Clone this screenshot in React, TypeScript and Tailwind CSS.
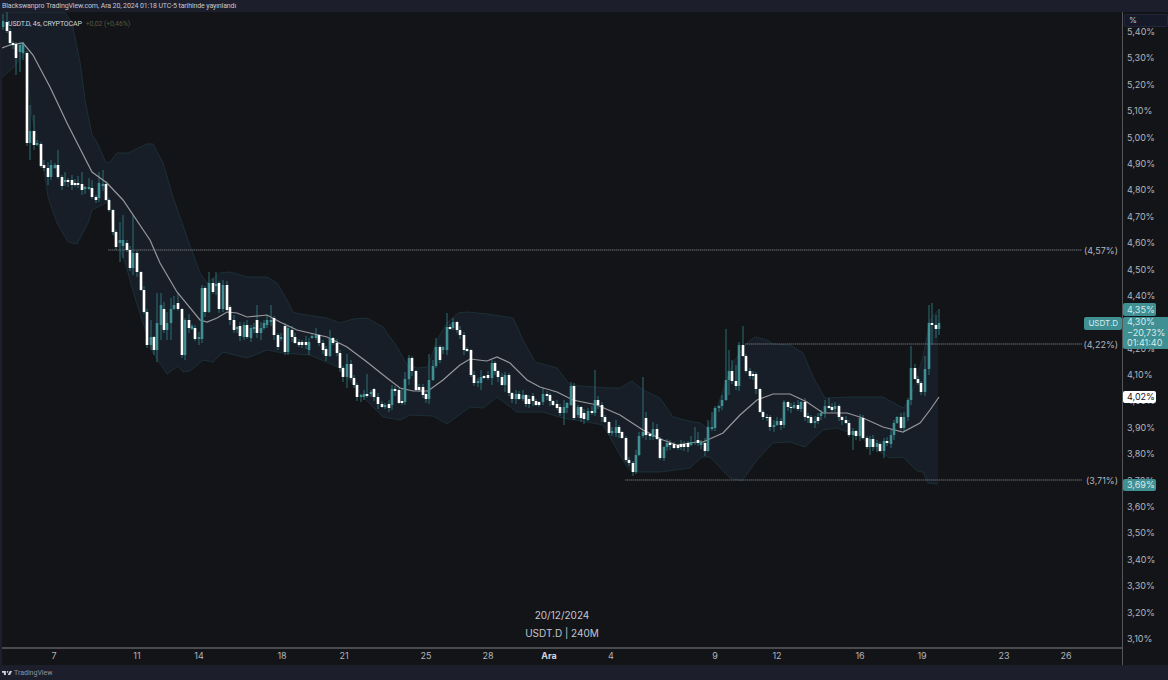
const FONT = { fontFamily: 'Inter, "Liberation Sans", sans-serif' };
const SMALL = { fontFamily: 'Roboto, "Liberation Sans", sans-serif' };

// x, top, bottom, up (1 teal / 0 white), optional wick top, wick bottom
type Candle = [number, number, number, number, number?, number?];

const candles: Candle[] = [
  [3, 21, 27, 1, 14, 30], [7, 22, 31, 0, 12], [10, 31, 43, 0], [13, 43, 45, 0], [16, 44, 58, 0, 42, 75], [20, 45, 52, 1, 42, 72],
  [23, 44, 53, 1, 42, 60], [27, 53, 143, 0], [30, 131, 143, 1, 105, 160], [34, 131, 145, 0, 115, 150], [37, 143, 145, 1],
  [41, 144, 166, 0], [44, 165, 168, 0, 160], [48, 168, 177, 0, 162, 185], [51, 165, 177, 1, 160, 180], [55, 165, 168, 1],
  [58, 165, 177, 0, 150], [62, 177, 186, 0, 175, 190], [65, 180, 182, 1, 172], [68, 180, 182, 0], [72, 180, 185, 0, 175, 190],
  [75, 183, 185, 0], [78, 183, 185, 0, 176], [82, 184, 190, 0, 172, 195], [85, 187, 189, 1], [89, 187, 189, 1, 178],
  [92, 188, 197, 0, 180], [96, 197, 200, 0], [99, 183, 198, 1, 172, 202], [103, 184, 186, 1, 170], [106, 184, 200, 0],
  [109, 200, 210, 0], [113, 210, 232, 0], [116, 232, 247, 0, 230, 250], [120, 240, 243, 1, 222, 262], [123, 240, 246, 1, 215, 258],
  [127, 243, 250, 0, 240], [130, 250, 268, 0], [133, 253, 268, 1, 215, 275], [137, 253, 272, 0], [141, 272, 290, 0],
  [144, 290, 312, 0], [147, 312, 345, 0], [151, 337, 345, 1, 320, 350], [154, 337, 350, 0], [157, 323, 350, 1, 293, 362],
  [161, 305, 325, 1, 293, 340], [164, 309, 330, 0, 302], [167, 323, 330, 1, 312, 340], [171, 309, 323, 1, 298, 340], [174, 305, 309, 1, 296],
  [178, 303, 309, 0, 293], [182, 309, 355, 0], [185, 320, 355, 1, 318, 360], [189, 320, 328, 0, 314], [192, 326, 329, 1],
  [195, 328, 339, 0, 325], [199, 337, 339, 1, 332, 345], [202, 288, 339, 1], [205, 288, 312, 0], [209, 283, 312, 1, 272],
  [213, 283, 292, 0, 278], [216, 284, 286, 1, 272, 295], [219, 283, 309, 0], [223, 285, 309, 1, 280, 312], [227, 285, 310, 0],
  [230, 307, 320, 0, 305, 325], [234, 320, 330, 0, 315], [237, 327, 329, 1], [240, 326, 336, 0, 322], [244, 325, 337, 1, 322, 340],
  [247, 325, 337, 0, 320], [251, 328, 338, 1, 325, 342], [254, 327, 329, 1], [257, 320, 333, 0, 305], [261, 328, 333, 1, 322, 340],
  [264, 323, 328, 1, 320], [267, 320, 325, 1, 315], [271, 320, 322, 1, 305], [274, 318, 335, 0], [278, 335, 347, 0, 333, 350],
  [281, 337, 339, 1], [285, 326, 352, 0], [288, 328, 352, 1, 325, 355], [292, 330, 337, 0, 326], [295, 337, 343, 0],
  [299, 342, 345, 0], [302, 342, 345, 0], [306, 342, 345, 0, 336], [309, 342, 350, 1, 338, 355], [312, 336, 338, 1],
  [316, 335, 338, 1, 328], [319, 335, 343, 0], [323, 343, 350, 0, 340], [326, 349, 356, 0], [330, 338, 356, 1, 330],
  [333, 338, 343, 0], [337, 343, 353, 0], [340, 353, 368, 0], [343, 368, 377, 0], [347, 364, 377, 1, 354, 388],
  [351, 364, 378, 0], [354, 378, 385, 0], [357, 385, 397, 0], [361, 395, 397, 1], [364, 394, 397, 1, 390, 400],
  [367, 394, 396, 0, 374], [371, 392, 394, 1], [374, 389, 397, 0], [378, 397, 404, 0], [382, 404, 407, 0],
  [385, 405, 407, 1], [389, 404, 408, 0, 400, 412], [392, 389, 405, 1, 385, 410], [395, 389, 391, 0], [399, 390, 403, 0],
  [402, 401, 403, 0, 388], [405, 379, 402, 1, 372], [409, 358, 379, 1, 355, 385], [412, 358, 371, 0], [416, 371, 390, 0],
  [419, 387, 390, 0, 384], [423, 387, 395, 0], [426, 394, 399, 0], [429, 380, 399, 1, 354], [433, 366, 380, 1, 360],
  [436, 347, 366, 1, 338], [440, 347, 360, 0], [443, 347, 350, 1], [447, 327, 350, 1, 313], [450, 327, 329, 0],
  [453, 322, 328, 1, 318], [457, 322, 330, 0], [460, 330, 335, 0], [464, 335, 350, 0], [467, 349, 351, 0],
  [471, 350, 375, 0], [474, 375, 383, 0], [478, 381, 383, 1], [481, 377, 383, 1, 370, 390], [484, 376, 378, 0],
  [488, 375, 378, 0], [492, 363, 378, 1, 360, 385], [495, 363, 371, 0], [498, 371, 377, 0], [502, 377, 385, 0],
  [505, 375, 385, 1, 372, 392], [509, 375, 393, 0], [512, 393, 399, 0], [516, 394, 399, 1], [519, 394, 399, 0],
  [523, 395, 399, 1, 390], [526, 395, 404, 0], [529, 399, 404, 0], [533, 396, 401, 0], [536, 401, 405, 0],
  [539, 402, 405, 0], [543, 394, 402, 1, 388], [547, 394, 396, 0], [550, 395, 401, 0], [553, 401, 405, 0],
  [557, 404, 408, 0], [560, 407, 413, 0], [564, 407, 413, 1, 400, 425], [567, 403, 408, 1], [571, 386, 405, 1],
  [574, 386, 418, 0], [578, 407, 415, 1], [581, 407, 418, 0], [584, 413, 419, 0], [588, 411, 420, 1],
  [592, 411, 413, 0, 406], [595, 400, 413, 1, 370], [598, 400, 405, 0], [602, 405, 417, 0], [605, 417, 422, 0],
  [609, 422, 433, 0], [612, 431, 433, 1], [616, 427, 433, 1, 420], [619, 427, 433, 0], [622, 432, 438, 0],
  [626, 438, 460, 0, 436], [629, 460, 463, 0], [633, 463, 472, 0], [636, 455, 472, 1, 450, 474], [639, 436, 455, 1, 432],
  [643, 432, 436, 1, 377], [646, 418, 435, 0, 412, 440], [650, 434, 436, 0], [653, 429, 437, 1, 422, 440], [657, 429, 439, 0, 424],
  [660, 439, 458, 0], [664, 447, 458, 1], [667, 443, 447, 1], [670, 443, 445, 0], [674, 444, 448, 0],
  [678, 445, 448, 0], [681, 444, 447, 0], [684, 444, 447, 0], [688, 443, 447, 0], [691, 442, 445, 1, 436],
  [695, 442, 443, 1, 427], [698, 440, 443, 0, 432], [701, 442, 445, 1], [705, 443, 451, 0, 438], [708, 427, 451, 1, 420],
  [712, 427, 429, 1, 412], [715, 408, 428, 1], [719, 406, 408, 1], [722, 400, 406, 1, 395, 410], [726, 380, 400, 1, 329],
  [729, 371, 380, 1, 350, 395], [732, 371, 381, 0, 360], [736, 381, 386, 0, 365], [739, 345, 386, 1], [743, 345, 356, 0, 326],
  [746, 356, 371, 0, 354], [750, 371, 376, 0, 368], [753, 374, 376, 0], [756, 374, 389, 0], [760, 389, 412, 0],
  [763, 412, 417, 0, 410, 420], [767, 417, 418, 0], [770, 417, 427, 0], [774, 425, 427, 1, 420, 432], [777, 421, 425, 1],
  [781, 421, 425, 0, 418, 430], [784, 402, 425, 1], [788, 402, 407, 0], [791, 407, 408, 0], [794, 405, 408, 1],
  [798, 405, 409, 0, 400], [801, 402, 409, 1], [805, 402, 417, 0], [808, 416, 418, 0], [811, 417, 423, 0],
  [815, 421, 423, 1, 416, 428], [818, 417, 421, 0], [821, 413, 416, 1], [825, 406, 413, 1, 400], [829, 406, 408, 0, 398],
  [832, 407, 410, 0], [835, 406, 409, 1, 402], [839, 406, 417, 0], [842, 417, 420, 0], [846, 420, 423, 0],
  [849, 423, 435, 0], [853, 431, 435, 1, 428, 450], [856, 431, 436, 0], [860, 418, 436, 1], [863, 418, 438, 0],
  [867, 438, 447, 0], [870, 439, 447, 1, 436, 455], [873, 439, 447, 0], [877, 443, 447, 1], [880, 444, 451, 0],
  [884, 441, 451, 1, 438, 458], [887, 441, 443, 0], [891, 435, 444, 1, 430], [894, 423, 435, 1, 420], [897, 417, 423, 1],
  [901, 417, 428, 0], [904, 417, 428, 1, 412], [908, 400, 417, 1], [911, 368, 400, 1, 346], [915, 368, 379, 0],
  [918, 379, 383, 0], [921, 383, 392, 0], [925, 369, 392, 1, 356], [929, 323, 369, 1, 305, 375], [932, 323, 325, 0, 303, 345],
  [936, 325, 329, 0, 315, 338], [939, 323, 329, 1, 309, 335],
];

const upper = "0,12 65,12 72,23 80,62 85,100 92,135 97,142 106,163 110,162 117,153 128,153 147,144 153,144 163,163 173,197 188,240 200,273 207,283 220,273 230,272 247,277 267,277 277,283 287,300 293,312 300,314 327,318 340,323 353,319 367,318 383,327 397,347 407,365 417,368 428,367 437,340 447,323 458,313 467,312 487,314 513,318 523,340 535,362 557,368 570,385 607,388 620,388 632,381 643,390 660,398 673,417 693,422 700,423 707,428 715,413 733,363 747,343 755,337 767,340 773,344 790,345 803,353 813,377 825,398 850,397 883,397 903,408 910,400 923,357 930,320 938,310";
const lower = "938,484 928,483 923,472 917,471 903,457 890,458 877,450 857,435 837,428 823,430 805,447 790,442 773,443 757,460 742,481 730,478 710,457 702,457 690,468 660,472 633,472 627,467 603,425 587,422 563,418 543,412 517,412 497,397 483,408 470,407 447,424 433,416 410,415 400,420 383,417 363,397 340,368 310,355 283,353 267,350 247,358 223,352 213,362 203,360 190,371 183,372 178,366 167,374 153,353 135,298 125,262 113,232 110,200 102,205 92,210 88,223 77,244 68,242 57,223 48,197 43,163 32,117 25,53 13,68 2,77 0,78";
const ma = "2,48 10,45 23,43 33,55 50,87 67,123 92,172 107,183 123,200 150,240 160,263 177,292 200,320 207,322 217,318 227,312 237,313 247,317 267,315 280,322 297,330 327,337 347,347 367,362 387,378 400,388 413,391 428,391 443,380 460,365 470,359 487,361 497,357 510,363 527,380 540,387 557,392 573,400 597,405 620,415 643,430 663,440 677,445 697,442 703,442 723,433 740,415 757,400 773,394 790,394 807,402 823,413 847,413 863,418 883,427 903,432 920,423 930,410 939,397";

const levels = [
  { y: 250, from: 108, label: "(4,57%)" },
  { y: 344, from: 745, label: "(4,22%)" },
  { y: 480, from: 625, label: "(3,71%)" },
];

const days = [
  { x: 54, t: "7" }, { x: 137, t: "11" }, { x: 199, t: "14" }, { x: 282, t: "18" }, { x: 344, t: "21" },
  { x: 426, t: "25" }, { x: 488, t: "28" }, { x: 549, t: "Ara", bold: true }, { x: 611, t: "4" }, { x: 715, t: "9" },
  { x: 777, t: "12" }, { x: 860, t: "16" }, { x: 922, t: "19" }, { x: 1004, t: "23" }, { x: 1066, t: "26" },
];

const prices = Array.from({ length: 24 }, (_, i) => (5.4 - i * 0.1).toFixed(2).replace(".", ",") + "%");

function Chart() {
  return (
    <svg viewBox="2 12 1120 635" className="absolute inset-0 h-full w-full">
      <polygon points={`${upper} ${lower}`} fill="#181e28" />
      <polyline points={upper} fill="none" stroke="#1b3036" strokeWidth="1" />
      <polyline points={lower} fill="none" stroke="#1b3036" strokeWidth="1" />
      {levels.map((l) => (
        <line key={l.y} x1={l.from} x2="1082" y1={l.y} y2={l.y} stroke="#66686c" strokeWidth="1" strokeDasharray="1.5 0.5" />
      ))}
      {candles.map(([x, top, bottom, up, wt, wb], i) => (
        <line
          key={x}
          x1={x}
          x2={x}
          y1={wt ?? top - ((i * 7) % 4) - 1}
          y2={wb ?? bottom + ((i * 11) % 5) + 1}
          stroke="#2b6f73"
          strokeWidth="1"
        />
      ))}
      <polyline points={ma} fill="none" stroke="#98989b" strokeWidth="1.2" />
      {candles.map(([x, top, bottom, up]) => (
        <rect key={x} x={x - 1.3} y={top} width="2.6" height={bottom - top} fill={up ? "#3f8f93" : "#ffffff"} />
      ))}
    </svg>
  );
}

export default function App() {
  return (
    <div className="flex h-screen w-screen flex-col overflow-hidden bg-[#1c1f2b] text-[#b2b5bd]" style={FONT}>
      <header className="flex h-3 items-center pl-0.5 text-[7px] tracking-[-0.12px] text-[#c4c6cf]" style={SMALL}>
        Blackswanpro TradingView.com, Ara 20, 2024 01:18 UTC-5 tarihinde yayınlandı
      </header>

      <main className="flex min-h-0 flex-1 pl-0.5">
        <div className="flex min-w-0 flex-1 flex-col bg-[#131418]">
          <div className="relative flex-1">
            <Chart />
            <div className="absolute left-1.5 top-1.5 flex gap-1 text-[7px] leading-3 tracking-[-0.12px]" style={SMALL}>
              <span className="text-[#d1d4dc]">USDT.D, 4s, CRYPTOCAP</span>
              <span className="text-[#4f5a45]">+0,02 (+0,46%)</span>
            </div>
            {levels.map((l) => (
              <span key={l.y} className="absolute right-1 -translate-y-1/2 text-[9px]" style={{ top: l.y - 11 }}>
                {l.label}
              </span>
            ))}
            <div className="absolute bottom-1.5 left-0 right-0 flex flex-col items-center gap-0.5 text-[10px] leading-4 text-[#c4c6cc]">
              <span>20/12/2024</span>
              <span>USDT.D | 240M</span>
            </div>
            <span className="absolute right-0 top-[305px] rounded-xs bg-[#3f8f93] px-1 text-[8px] leading-[13px] text-[#d8ecec]">
              USDT.D
            </span>
          </div>
          <div className="relative h-[18px] border-t-2 border-[#4a4b4f] text-[9px]">
            {days.map((d) => (
              <span
                key={d.t}
                className={`absolute top-0 -translate-x-1/2 ${d.bold ? "font-bold text-[#d1d4dc]" : ""}`}
                style={{ left: d.x - 2 }}
              >
                {d.t}
              </span>
            ))}
          </div>
        </div>

        <aside className="relative flex w-[46px] flex-col justify-between border-l border-[#55565a] bg-[#131418] pb-4.5 pl-1 pt-3 text-[9px] leading-4">
          {prices.map((p) => (
            <span key={p}>{p}</span>
          ))}
          <div className="absolute left-px right-0 top-0.5 h-[13px] rounded-xs border border-[#22263a] bg-[#161a28] pl-1 text-[8px] leading-[11px] text-[#c4c6cf]">
            %
          </div>
          <div className="absolute left-0 top-[291px] w-[33px] rounded-xs bg-[#3f8f93] pl-1 leading-[13px] text-[#d8ecec]">4,35%</div>
          <div className="absolute left-0 top-[305px] rounded-xs bg-[#3f8f93] px-1 leading-[10.5px] text-[#d8ecec]">
            <div>4,30%</div>
            <div>−20,73%</div>
            <div>01:41:40</div>
          </div>
          <div className="absolute left-0 top-[379px] w-[33px] rounded-xs bg-white pl-1 leading-[12px] text-[#131418]">4,02%</div>
          <div className="absolute left-0 top-[467px] w-[33px] rounded-xs bg-[#3f8f93] pl-1 leading-[12px] text-[#d8ecec]">3,69%</div>
        </aside>
      </main>

      <footer className="flex h-[15px] items-center gap-0.5 pl-0.5 text-[7px] text-[#8f93a0]" style={SMALL}>
        <svg viewBox="0 2 36 14" className="h-1.5 w-2.5" fill="#d1d4dc">
          <path d="M14 2H0v6h7v8h7V2z" />
          <circle cx="20" cy="5" r="3" />
          <path d="M28 2h8l-7 14h-8l7-14z" />
        </svg>
        <span className="pt-0.5">TradingView</span>
      </footer>
    </div>
  );
}
